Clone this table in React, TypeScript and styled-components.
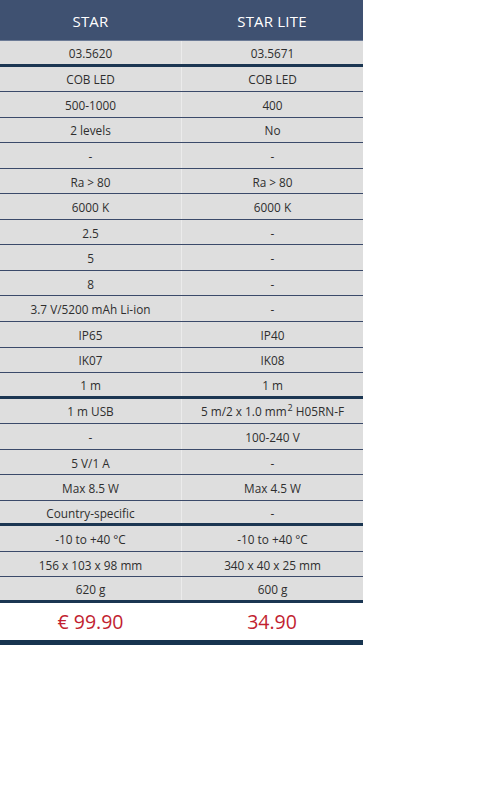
import React from "react";
import styled, { createGlobalStyle } from "styled-components";

const GlobalStyle = createGlobalStyle`
  html, body {
    margin: 0;
    padding: 0;
    background: #ffffff;
  }
  body {
    font-family: "Open Sans", "Liberation Sans", sans-serif;
  }
`;

const Table = styled.div`
  width: 363px;
  display: flex;
  flex-direction: column;
`;

const HeaderRow = styled.div`
  display: grid;
  grid-template-columns: 181px 182px;
  height: 41px;
  background: #3f5171;
  border-bottom: 1px solid #6c7b96;
  box-sizing: border-box;
`;

const HeaderCell = styled.div`
  display: flex;
  align-items: center;
  justify-content: center;
  color: #ffffff;
  font-size: 15px;
  letter-spacing: 0.2px;
  padding-top: 2px;
`;

const Row = styled.div<{ $line: "thin" | "thick" }>`
  display: grid;
  grid-template-columns: 181px 182px;
  height: 25.55px;
  box-sizing: border-box;
  background: #dedede;
  border-bottom: ${(p) =>
    p.$line === "thick" ? "3px solid #1b3652" : "1.5px solid #3b4a6a"};
`;

const Cell = styled.div`
  display: flex;
  align-items: center;
  justify-content: center;
  color: #2e2e2e;
  font-size: 11.8px;
  white-space: nowrap;
  padding-top: 1px;
  & + & {
    border-left: 1px solid #ebebeb;
  }
`;

const Sup = styled.span`
  font-size: 9px;
  position: relative;
  top: -4px;
  margin-left: 1px;
`;

const PriceRow = styled.div`
  display: grid;
  grid-template-columns: 181px 182px;
  height: 42px;
  box-sizing: border-box;
  background: #ffffff;
  border-bottom: 5px solid #17344f;
`;

const Price = styled.div`
  display: flex;
  align-items: center;
  justify-content: center;
  color: #c21f31;
  font-size: 19.5px;
  padding-bottom: 1px;
`;

const rows: [React.ReactNode, React.ReactNode, "thin" | "thick"][] = [
  ["03.5620", "03.5671", "thick"],
  ["COB LED", "COB LED", "thin"],
  ["500-1000", "400", "thin"],
  ["2 levels", "No", "thin"],
  ["-", "-", "thin"],
  ["Ra > 80", "Ra > 80", "thin"],
  ["6000 K", "6000 K", "thin"],
  ["2.5", "-", "thin"],
  ["5", "-", "thin"],
  ["8", "-", "thin"],
  ["3.7 V/5200 mAh Li-ion", "-", "thin"],
  ["IP65", "IP40", "thin"],
  ["IK07", "IK08", "thin"],
  ["1 m", "1 m", "thick"],
  [
    "1 m USB",
    <>
      5 m/2 x 1.0 mm<Sup>2</Sup>&nbsp;H05RN-F
    </>,
    "thin",
  ],
  ["-", "100-240 V", "thin"],
  ["5 V/1 A", "-", "thin"],
  ["Max 8.5 W", "Max 4.5 W", "thin"],
  ["Country-specific", "-", "thick"],
  ["-10 to +40 °C", "-10 to +40 °C", "thin"],
  ["156 x 103 x 98 mm", "340 x 40 x 25 mm", "thin"],
  ["620 g", "600 g", "thick"],
];

export default function App() {
  return (
    <>
      <GlobalStyle />
      <Table>
        <HeaderRow>
          <HeaderCell>STAR</HeaderCell>
          <HeaderCell>STAR LITE</HeaderCell>
        </HeaderRow>
        {rows.map(([a, b, line], i) => (
          <Row key={i} $line={line}>
            <Cell>{a}</Cell>
            <Cell>{b}</Cell>
          </Row>
        ))}
        <PriceRow>
          <Price>€ 99.90</Price>
          <Price>34.90</Price>
        </PriceRow>
      </Table>
    </>
  );
}
